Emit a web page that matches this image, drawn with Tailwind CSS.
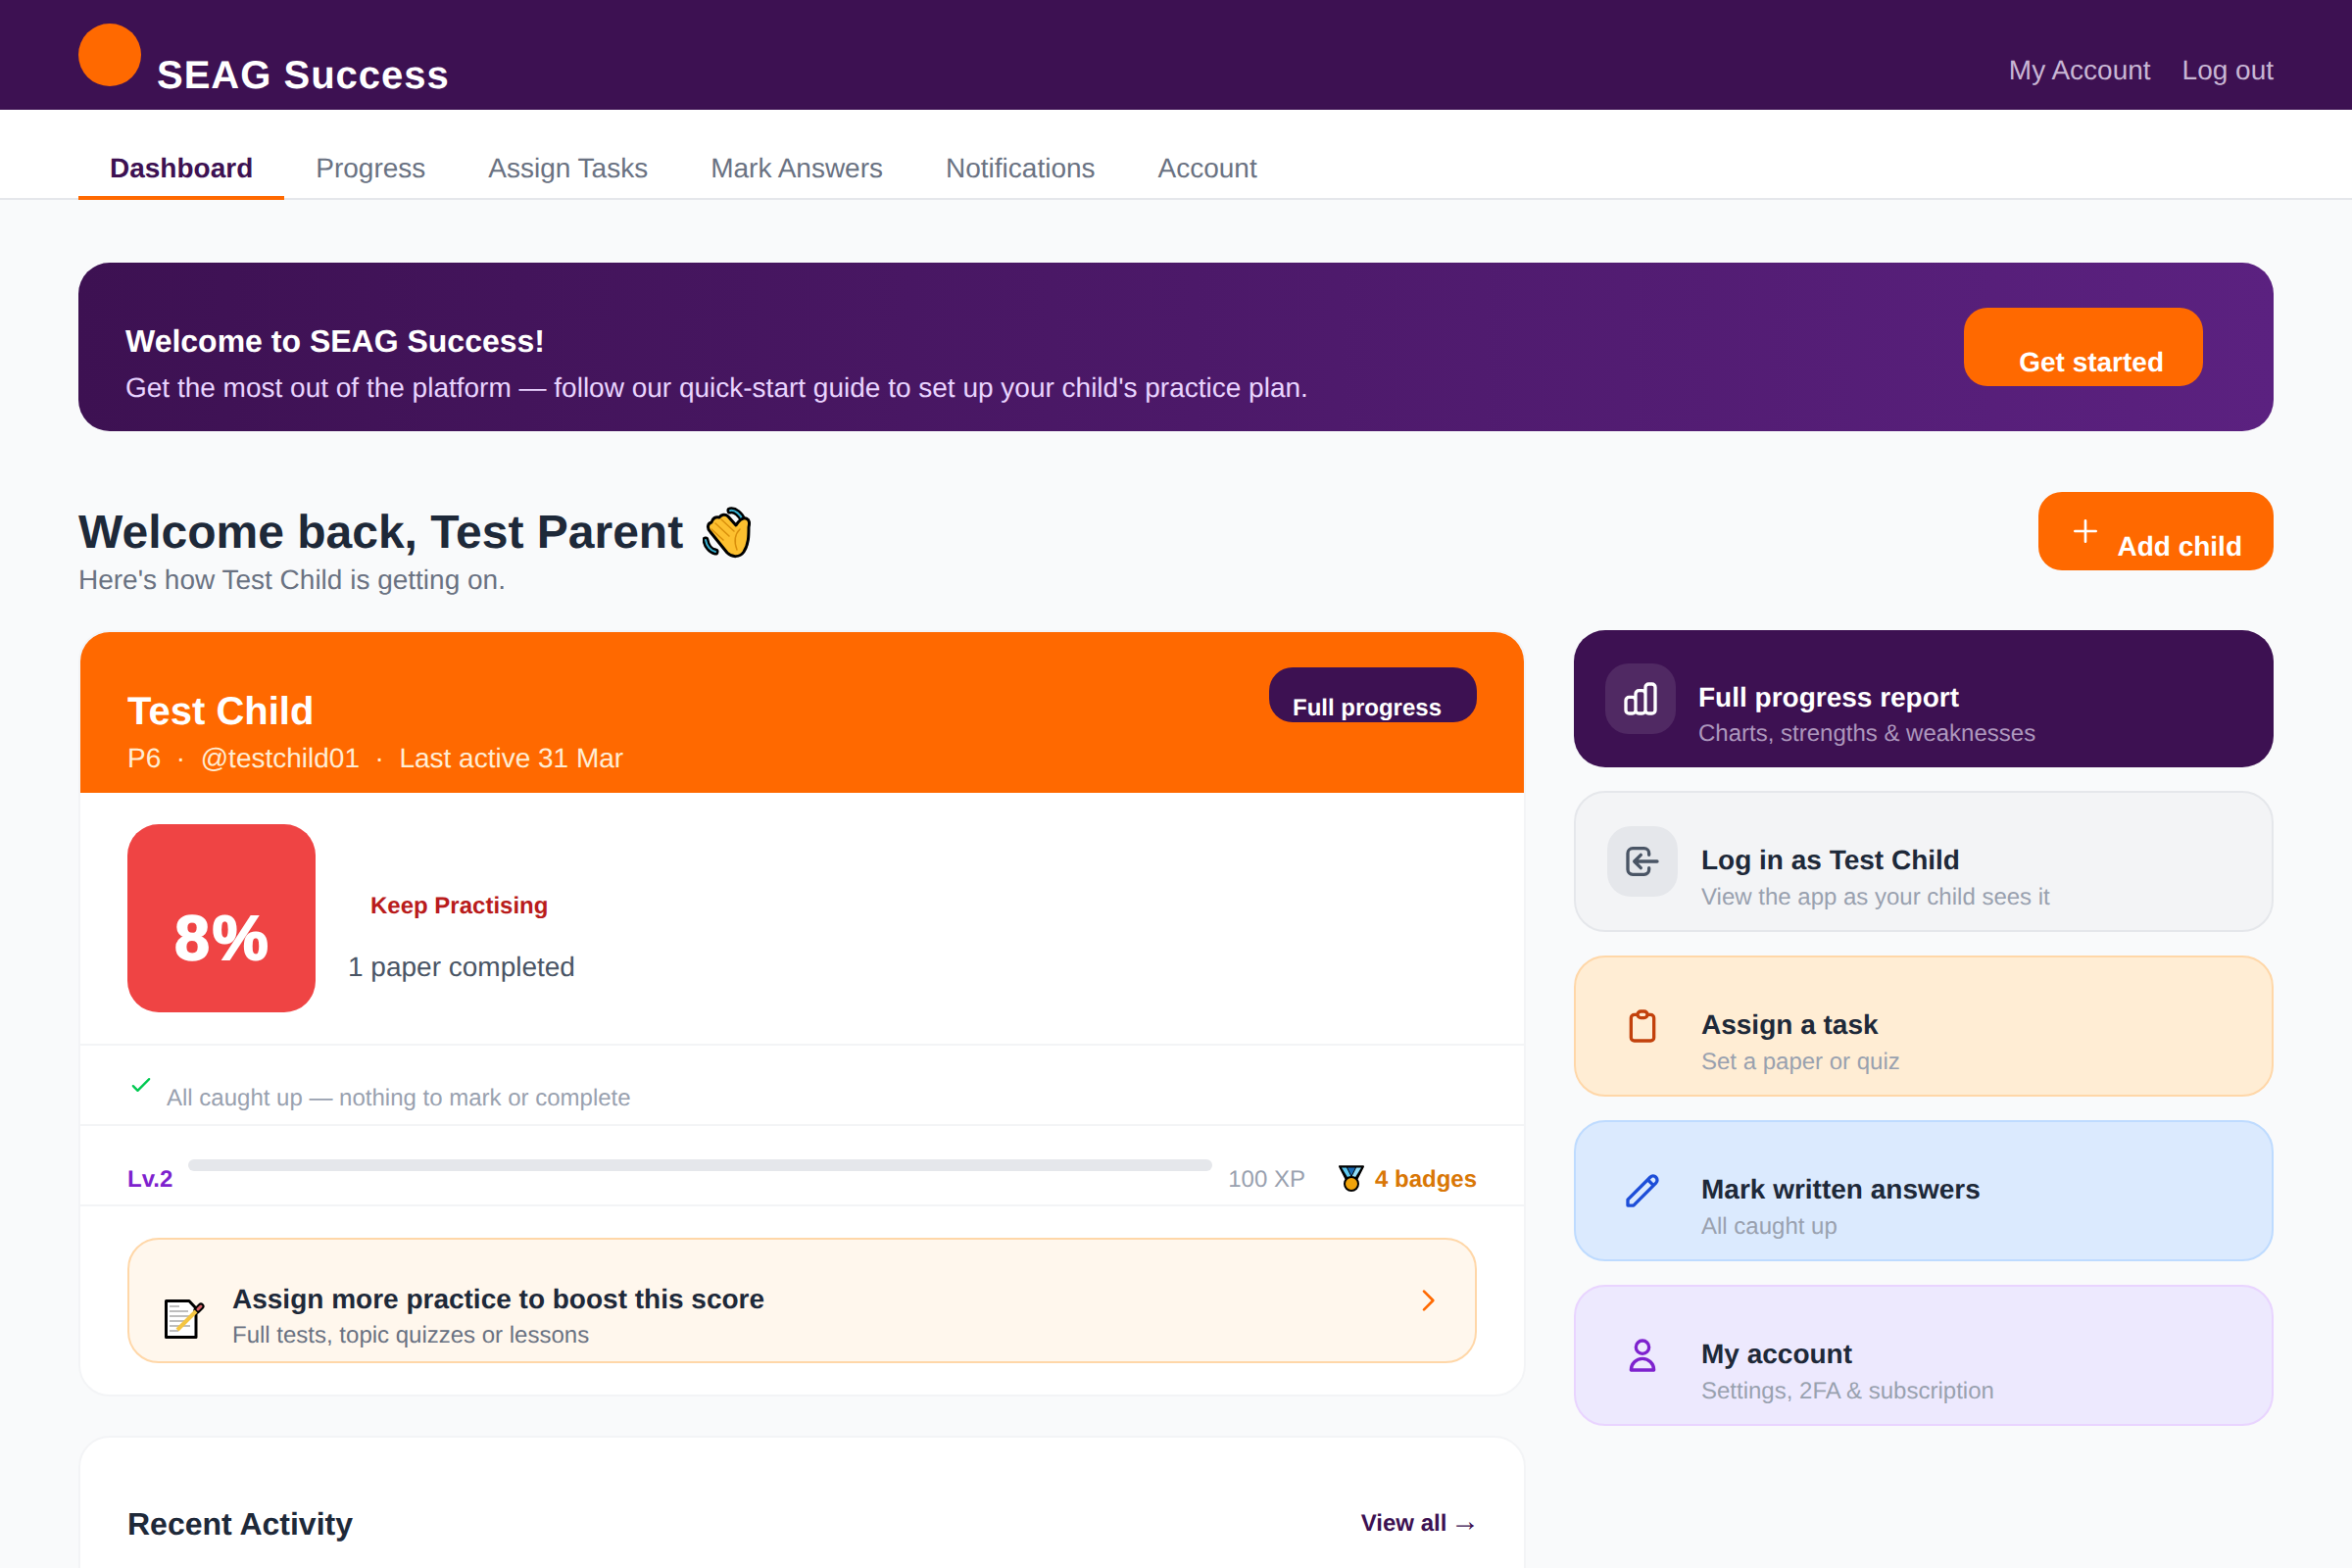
<!DOCTYPE html>
<html lang="en" class="text-[32px]">
<head>
<meta charset="utf-8">
<title>SEAG Success</title>
<script src="https://cdn.jsdelivr.net/npm/@tailwindcss/browser@4"></script>
</head>
<body class="bg-gray-50 font-['Liberation_Sans',Arial,sans-serif] text-gray-800 [text-rendering:geometricPrecision]">
<div class="h-[1600px] overflow-hidden">

<header class="flex justify-between items-start h-14 px-10 bg-[#3d1152]">
  <div class="flex items-start gap-2 pt-3">
    <div class="w-8 h-8 rounded-full bg-[#ff6900]"></div>
    <span class="mt-[25px] text-xl font-bold tracking-wide text-white">SEAG Success</span>
  </div>
  <nav class="flex gap-4 pt-[52px] text-sm text-[#c8b6d4]">
    <a>My Account</a>
    <a>Log out</a>
  </nav>
</header>

<nav class="flex h-[92px] px-10 bg-white border-b-2 border-gray-200 text-sm text-gray-500">
  <a class="h-[92px] px-4 pt-5 font-bold text-[#3d1152] border-b-4 border-[#ff6900]">Dashboard</a>
  <a class="px-4 pt-5">Progress</a>
  <a class="px-4 pt-5">Assign Tasks</a>
  <a class="px-4 pt-5">Mark Answers</a>
  <a class="px-4 pt-5">Notifications</a>
  <a class="px-4 pt-5">Account</a>
</nav>

<main class="px-10 pt-8">
  <section class="flex items-center justify-between h-[172px] pl-6 pr-[72px] rounded-2xl bg-linear-to-r from-[#3d1152] to-[#5b2180]">
    <div class="pt-[32px]">
      <h2 class="text-base font-bold text-white">Welcome to SEAG Success!</h2>
      <p class="mt-[4px] text-sm text-purple-200">Get the most out of the platform — follow our quick-start guide to set up your child's practice plan.</p>
    </div>
    <a class="h-[80px] pt-[36px] pl-[56px] pr-[40px] rounded-xl bg-[#ff6900] text-sm font-bold text-white">Get started</a>
  </section>

  <section class="flex justify-between items-start mt-[62px]">
    <div class="pt-[13px]">
      <h1 class="h-[57px] text-2xl font-bold text-gray-800 flex items-center gap-[20px]"><span>Welcome back, Test Parent</span>
        <svg class="w-[50px] h-[53px]" viewBox="0 0 50 53" role="img" aria-label="waving hand">
          <g fill="none" stroke-linecap="round">
            <path d="M28 4C33 3 39 8 41 14" stroke="#000" stroke-width="7"/>
            <path d="M28 4C33 3 39 8 41 14" stroke="#35b0d2" stroke-width="2"/>
            <path d="M3 34C4 40 8 45 13 46" stroke="#000" stroke-width="7"/>
            <path d="M3 34C4 40 8 45 13 46" stroke="#35b0d2" stroke-width="2"/>
          </g>
          <path d="M8 26C4 22 5 17 9 16C10 12 13 10 17 11C19 8 23 7 26 10L34 19C36 16 40 11 44 12C48 13 48 17 47 21C47 30 47 38 42 46C38 52 30 52 25 47Z" fill="#fdc02f" stroke="#000" stroke-width="3" stroke-linejoin="round"/>
          <g fill="none" stroke="#d98f0c" stroke-width="1.5" stroke-linecap="round">
            <path d="M13 17L27 30"/><path d="M19 13L32 25"/><path d="M9 23L21 34"/><path d="M38 23C33 28 32 36 35 44"/>
          </g>
        </svg>
      </h1>
      <p class="text-sm text-gray-500">Here's how Test Child is getting on.</p>
    </div>
    <a class="flex gap-2 h-[80px] px-4 rounded-xl bg-[#ff6900] text-sm font-bold text-white">
      <svg class="w-4 h-4 self-center" fill="none" stroke="currentColor" stroke-width="2" stroke-linecap="round" stroke-linejoin="round" viewBox="0 0 24 24"><path d="M12 4v16m8-8H4"/></svg>
      <span class="pt-[36px]">Add child</span>
    </a>
  </section>

  <div class="grid grid-cols-[1fr_714px] gap-[49px] mt-[31px] items-start">
    <div class="flex flex-col gap-5">
      <article class="rounded-2xl border-2 border-gray-100 bg-white overflow-hidden">
        <div class="flex justify-between items-start h-[164px] px-6 pt-[36px] bg-[#ff6900]">
          <div class="pt-[17px]">
            <h2 class="text-xl font-bold text-white">Test Child</h2>
            <p class="text-sm text-orange-100">P6 &nbsp;·&nbsp; @testchild01 &nbsp;·&nbsp; Last active 31 Mar</p>
          </div>
          <a class="h-[56px] pl-3 pr-[36px] pt-[26px] rounded-xl bg-[#3d1152] text-xs font-bold text-white whitespace-nowrap">Full progress</a>
        </div>

        <div class="flex gap-4 p-4 px-6">
          <div class="flex items-center justify-center w-24 h-24 pt-5 pl-[3px] rounded-2xl bg-[#ef4444] text-[64px] leading-none font-bold tracking-[3px] text-white [-webkit-text-stroke:2px_white]">8%</div>
          <div class="pt-[68px]">
            <div class="ml-3 text-xs font-bold text-[#b91c1c]">Keep Practising</div>
            <div class="mt-[26px] ml-[1px] text-sm text-gray-600">1 paper completed</div>
          </div>
        </div>

        <div class="flex items-start gap-[12px] h-[82px] px-6 border-t-2 border-gray-100">
          <svg class="w-3.5 h-3.5 mt-[26px] text-green-500" fill="none" stroke="currentColor" stroke-width="2" stroke-linecap="round" stroke-linejoin="round" viewBox="0 0 24 24"><path d="M5 13l4 4L19 7"/></svg>
          <span class="pt-[38px] text-xs text-gray-400">All caught up — nothing to mark or complete</span>
        </div>

        <div class="flex items-start h-[82px] px-6 pt-[34px] border-t-2 border-gray-100">
          <span class="pt-[5px] text-xs font-bold text-[#7e22ce]">Lv.2</span>
          <div class="flex-1 h-1.5 mx-2 rounded-full bg-gray-200"></div>
          <span class="pt-[5px] text-xs text-gray-400">100 XP</span>
          <svg class="w-[26px] h-[27px] mt-[6px] ml-[34px] mr-[11px]" viewBox="0 0 26 27" role="img" aria-label="medal">
            <path d="M1 1.2H25L17 17H9Z" fill="#000" stroke="#000" stroke-width="2" stroke-linejoin="round"/>
            <path d="M3 2.5H8L13 12.5L11 15.5Z" fill="#5cc8f0"/>
            <path d="M23 2.5H18L13 12.5L15 15.5Z" fill="#8fdcf7"/>
            <path d="M9 2.5H17L13 10.5Z" fill="#1769b5"/>
            <circle cx="13" cy="19" r="7" fill="#f0a30a" stroke="#000" stroke-width="2"/>
          </svg>
          <span class="pt-[5px] text-xs font-bold text-[#d97706]">4 badges</span>
        </div>

        <div class="border-t-2 border-gray-100 p-4 px-6">
          <div class="flex items-center h-[128px] px-4 rounded-2xl border-2 border-orange-200 bg-orange-50">
            <svg class="w-[41px] h-[40px] mt-[38px] ml-[4px] mr-[28px]" viewBox="0 0 41 40" role="img" aria-label="memo">
              <path d="M1.5 1.5H25L32 9V38.5H1.5Z" fill="#fff" stroke="#000" stroke-width="3" stroke-linejoin="round"/>
              <g stroke="#a8a8a8" stroke-width="1.4">
                <path d="M5 7H15"/><path d="M5 12H24"/><path d="M5 17H26"/><path d="M5 22H22"/><path d="M5 27H26"/><path d="M5 32H14"/>
              </g>
              <path d="M33 11L37 7" stroke="#000" stroke-width="7" stroke-linecap="round"/>
              <path d="M34 10L37 7" stroke="#d9656a" stroke-width="3" stroke-linecap="round"/>
              <path d="M13 31L32 12" stroke="#f4c542" stroke-width="4"/>
            </svg>
            <div class="flex-1 pt-[31px]">
              <div class="text-sm font-bold text-gray-800">Assign more practice to boost this score</div>
              <div class="mt-[1px] text-xs text-gray-500">Full tests, topic quizzes or lessons</div>
            </div>
            <svg class="w-4 h-4 text-orange-500" fill="none" stroke="currentColor" stroke-width="2" stroke-linecap="round" stroke-linejoin="round" viewBox="0 0 24 24"><path d="M9 5l7 7-7 7"/></svg>
          </div>
        </div>
      </article>

      <article class="h-[400px] rounded-2xl border-2 border-gray-100 bg-white px-6 pt-[64px]">
        <div class="flex justify-between items-start">
          <h2 class="text-base font-bold text-gray-800">Recent Activity</h2>
          <a class="pt-[7px] text-xs font-bold text-[#3d1152] whitespace-nowrap">View all <span class="-mx-[3px] text-[30px] leading-none font-normal">→</span></a>
        </div>
      </article>
    </div>

    <aside class="flex flex-col gap-3">
      <a class="flex items-center gap-[23px] h-[140px] pl-4 rounded-2xl bg-[#3d1152]">
        <span class="flex items-center justify-center w-9 h-9 rounded-xl bg-white/10 text-white">
          <svg class="w-5 h-5" fill="none" stroke="currentColor" stroke-width="2" stroke-linecap="round" stroke-linejoin="round" viewBox="0 0 24 24"><path d="M9 19v-6a2 2 0 00-2-2H5a2 2 0 00-2 2v6a2 2 0 002 2h2a2 2 0 002-2zm0 0V9a2 2 0 012-2h2a2 2 0 012 2v10m-6 0a2 2 0 002 2h2a2 2 0 002-2m0 0V5a2 2 0 012-2h2a2 2 0 012 2v14a2 2 0 01-2 2h-2a2 2 0 01-2-2z"/></svg>
        </span>
        <div class="pt-[31px]">
          <div class="text-sm font-bold text-white">Full progress report</div>
          <div class="mt-[1px] text-xs text-[#ad97bd]">Charts, strengths &amp; weaknesses</div>
        </div>
      </a>

      <a class="flex items-center gap-3 h-[144px] pl-4 rounded-2xl border-2 border-gray-200 bg-gray-100">
        <span class="flex items-center justify-center w-9 h-9 rounded-xl bg-gray-200 text-gray-600">
          <svg class="w-5 h-5" fill="none" stroke="currentColor" stroke-width="2" stroke-linecap="round" stroke-linejoin="round" viewBox="0 0 24 24"><path d="M11 16l-4-4m0 0l4-4m-4 4h14m-5 4v1a3 3 0 01-3 3H6a3 3 0 01-3-3V7a3 3 0 013-3h7a3 3 0 013 3v1"/></svg>
        </span>
        <div class="pt-[32px]">
          <div class="text-sm font-bold text-gray-800">Log in as Test Child</div>
          <div class="mt-[2px] text-xs text-gray-400">View the app as your child sees it</div>
        </div>
      </a>

      <a class="flex items-center gap-3 h-[144px] pl-4 rounded-2xl border-2 border-orange-200 bg-orange-100">
        <span class="flex items-center justify-center w-9 h-9 text-[#c2410c]">
          <svg class="w-5 h-5" fill="none" stroke="currentColor" stroke-width="2" stroke-linecap="round" stroke-linejoin="round" viewBox="0 0 24 24"><path d="M9 5H7a2 2 0 00-2 2v12a2 2 0 002 2h10a2 2 0 002-2V7a2 2 0 00-2-2h-2M9 5a2 2 0 002 2h2a2 2 0 002-2M9 5a2 2 0 012-2h2a2 2 0 012 2"/></svg>
        </span>
        <div class="pt-[32px]">
          <div class="text-sm font-bold text-gray-800">Assign a task</div>
          <div class="mt-[2px] text-xs text-gray-400">Set a paper or quiz</div>
        </div>
      </a>

      <a class="flex items-center gap-3 h-[144px] pl-4 rounded-2xl border-2 border-blue-200 bg-blue-100">
        <span class="flex items-center justify-center w-9 h-9 text-[#1d4ed8]">
          <svg class="w-5 h-5" fill="none" stroke="currentColor" stroke-width="2" stroke-linecap="round" stroke-linejoin="round" viewBox="0 0 24 24"><path d="M15.232 5.232l3.536 3.536m-2.036-5.036a2.5 2.5 0 113.536 3.536L6.5 21.036H3v-3.572L16.732 3.732z"/></svg>
        </span>
        <div class="pt-[32px]">
          <div class="text-sm font-bold text-gray-800">Mark written answers</div>
          <div class="mt-[2px] text-xs text-gray-400">All caught up</div>
        </div>
      </a>

      <a class="flex items-center gap-3 h-[144px] pl-4 rounded-2xl border-2 border-purple-200 bg-violet-100">
        <span class="flex items-center justify-center w-9 h-9 text-[#7e22ce]">
          <svg class="w-5 h-5" fill="none" stroke="currentColor" stroke-width="2" stroke-linecap="round" stroke-linejoin="round" viewBox="0 0 24 24"><path d="M16 7a4 4 0 11-8 0 4 4 0 018 0zM12 14a7 7 0 00-7 7h14a7 7 0 00-7-7z"/></svg>
        </span>
        <div class="pt-[32px]">
          <div class="text-sm font-bold text-gray-800">My account</div>
          <div class="mt-[2px] text-xs text-gray-400">Settings, 2FA &amp; subscription</div>
        </div>
      </a>
    </aside>
  </div>
</main>
</div>
</body>
</html>
